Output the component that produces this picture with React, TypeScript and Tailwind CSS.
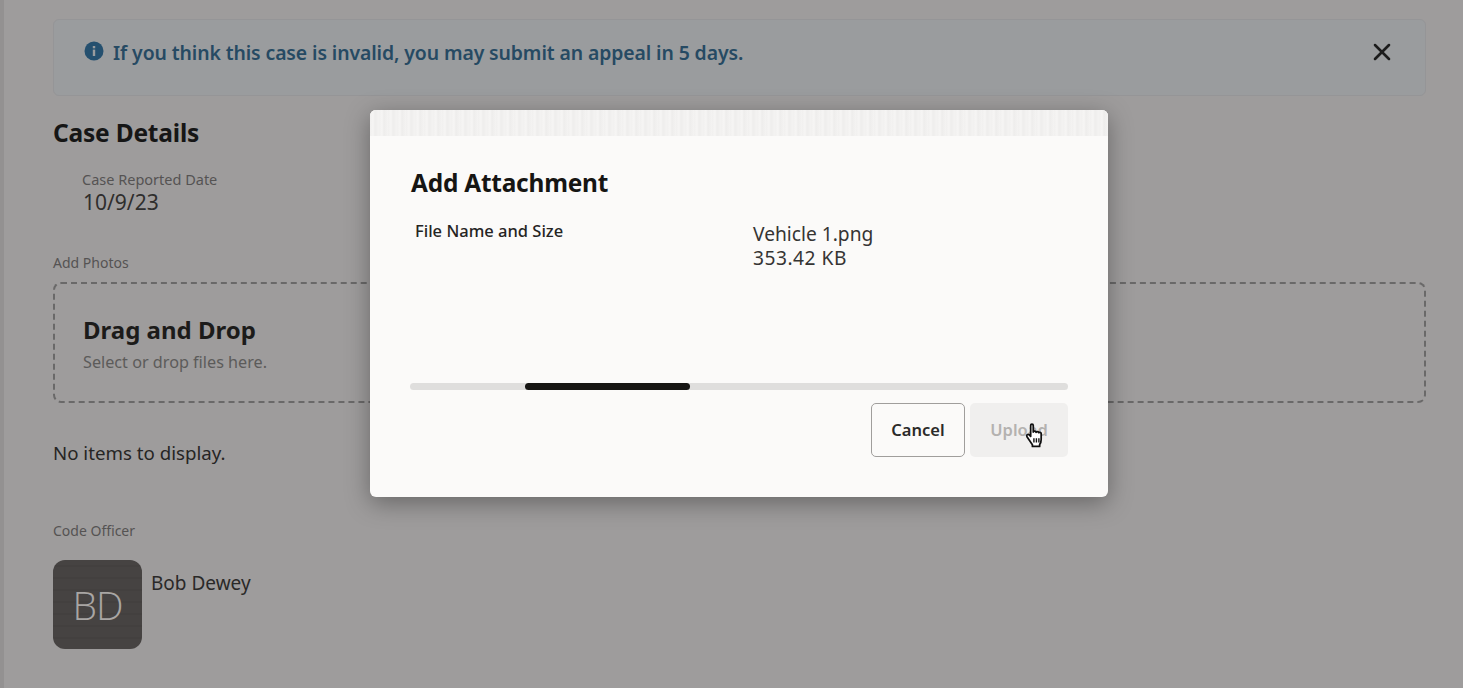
import { X } from "lucide-react";

function HandCursor() {
  return (
    <svg width="22" height="26" viewBox="0 0 20 24" className="absolute left-[54px] top-[20px]">
      <path
        d="M6 2.2c0-1.5 2.4-1.5 2.4 0v6.2c.4-1.2 2.4-1.1 2.6.2.4-1 2.3-.9 2.5.4.5-.8 2.2-.5 2.2.8v5.4c0 2.2-.5 3.4-1.4 4.6v1.8H7.6v-1.6L2.6 12.6c-1-1.4.8-2.8 2-1.6L6 12.4V2.2z"
        fill="#ffffff"
        stroke="#101010"
        strokeWidth="1.6"
        strokeLinejoin="round"
      />
      <path d="M9 14v4M11.3 14v4M13.6 14v4" stroke="#101010" strokeWidth="1.3" />
    </svg>
  );
}

export default function App() {
  return (
    <div
      className="relative h-[688px] w-[1463px] overflow-hidden bg-[#9e9c9c] text-[#1d1c1b]"
      style={{ fontFamily: '"Noto Sans", "Open Sans", sans-serif' }}
    >
      <div className="absolute inset-y-0 left-0 w-[4px] bg-[#939191]" />

      {/* Page behind the dialog */}
      <div className="pl-[53px] pr-[37px] pt-[19px]">
        <div className="flex h-[77px] items-start justify-between rounded-md border border-[#959597] bg-[#9a9c9e] pl-[30px] pr-[29px] pt-[20px]">
          <div className="flex items-start gap-[9px]">
            <svg width="20" height="20" viewBox="0 0 20 20" className="mt-[1px]">
              <circle cx="10" cy="10" r="9.5" fill="#25506f" />
              <rect x="8.8" y="8.6" width="2.4" height="6.4" fill="#9a9c9e" />
              <rect x="8.8" y="5" width="2.4" height="2.3" fill="#9a9c9e" />
            </svg>
            <p className="text-[19.4px] font-semibold leading-[26px] tracking-[-0.1px] text-[#264a63]">
              If you think this case is invalid, you may submit an appeal in 5 days.
            </p>
          </div>
          <X className="-mt-[2px] h-[28px] w-[28px] text-[#1c1c1c]" strokeWidth={2.2} />
        </div>

        <h2 className="mt-[21px] text-[24.5px] font-bold leading-[32px] tracking-[-0.2px] text-[#161616]">Case Details</h2>

        <div className="mt-[20px] pl-[29px]">
          <div className="text-[14.5px] leading-[20px] text-[#555353]">Case Reported Date</div>
          <div className="ml-[1px] text-[21px] leading-[26px] text-[#2f2e2d]">10/9/23</div>
        </div>

        <div className="mt-[38px] text-[14px] leading-[20px] text-[#555353]">Add Photos</div>

        <div className="mt-[9px] h-[121px] rounded-lg border-2 border-dashed border-[#6a6969] pl-[28px] pt-[27px]">
          <div className="text-[24px] font-bold leading-[38px] text-[#1c1b1a]">Drag and Drop</div>
          <div className="mt-[1px] text-[16.2px] leading-[24px] text-[#5c5b5a]">Select or drop files here.</div>
        </div>

        <p className="mt-[37px] text-[18.7px] leading-[26px] text-[#262524]">No items to display.</p>

        <div className="mt-[55px] text-[14px] leading-[20px] text-[#555353]">Code Officer</div>

        <div className="mt-[19px] flex items-start gap-[9px]">
          <div className="flex h-[89px] w-[89px] items-center justify-center rounded-xl bg-[#454241] bg-[repeating-linear-gradient(0deg,#464342_0px,#464342_10px,#403d3c_11px,#464342_12px)]">
            <span className="text-[39px] leading-none tracking-[-1px] text-[#a9a6a4]" style={{ fontFamily: '"Open Sans", sans-serif', fontWeight: 300 }}>
              BD
            </span>
          </div>
          <span className="mt-[10px] text-[19px] leading-[26px] text-[#2a2928]">Bob Dewey</span>
        </div>
      </div>

      {/* Dialog */}
      <div className="absolute left-[370px] top-[110px] h-[387px] w-[738px] overflow-hidden rounded-md bg-[#fbfaf9] shadow-[0_6px_24px_rgba(0,0,0,0.35)]">
        <div className="h-[26px] bg-[#f1f0ef] bg-[repeating-linear-gradient(90deg,#f1f0ef_0px,#f6f5f4_3px,#eeedec_5px,#f4f3f2_9px)]" />
        <div className="px-[40px] pt-[30px]">
          <h3 className="ml-[1px] text-[24.4px] font-bold leading-[34px] tracking-[-0.2px] text-[#161513]">Add Attachment</h3>
          <div className="mt-[18px] flex">
            <div className="w-[343px] pl-[5px] text-[16.5px] font-medium leading-[25px] text-[#252423]">File Name and Size</div>
            <div className="mt-[4px] text-[19.2px] leading-[24px] text-[#353433]">
              <div>Vehicle 1.png</div>
              <div className="tracking-[0.5px]">353.42 KB</div>
            </div>
          </div>
          <div className="mt-[113px] h-[7px] w-[658px] rounded-full bg-[#dfdedd]">
            <div className="ml-[115px] h-[7px] w-[165px] rounded-full bg-[#161513]" />
          </div>
          <div className="mt-[13px] flex justify-end gap-[5px]">
            <div className="flex h-[54px] w-[94px] items-center justify-center rounded-[5px] border-[1.5px] border-[#a09e9c] text-[16.5px] font-semibold text-[#2b2a29]">
              Cancel
            </div>
            <div className="relative flex h-[54px] w-[98px] items-center justify-center rounded-[5px] bg-[#f0efee] text-[16.5px] font-semibold text-[#b4b2b0]">
              Upload
              <HandCursor />
            </div>
          </div>
        </div>
      </div>
    </div>
  );
}
